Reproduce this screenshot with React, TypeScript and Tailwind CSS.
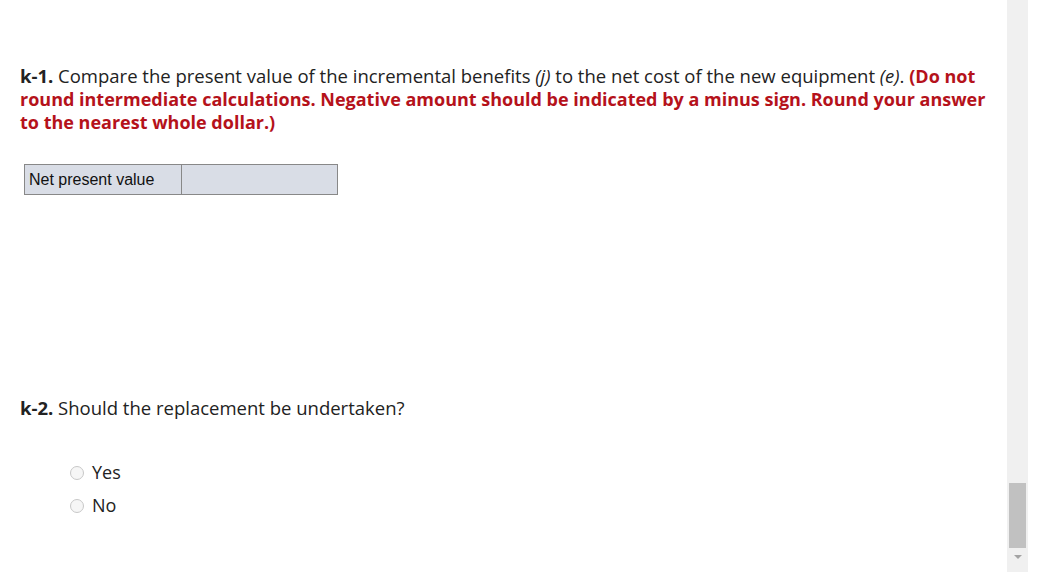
const Radio = ({ label }: { label: string }) => (
  <label className="flex items-center h-[33px] gap-[8px]">
    <span className="w-[14px] h-[14px] rounded-full border border-[#c8c8c8] bg-[#f6f6f6]" />
    <span className="text-[18px] text-[#222]">{label}</span>
  </label>
)

const App = () => {
  return (
    <div className="flex h-[572px] w-[1047px] bg-white overflow-hidden font-['Open_Sans',sans-serif]">
      <div className="flex-1 pl-[20px] pr-[10px] pt-[64px]">
        <p className="text-[18.5px] leading-[23px] text-[#222] whitespace-nowrap">
          <b>k-1.</b> Compare the present value of the incremental benefits <i>(j)</i> to the net cost of the new
          equipment <i>(e)</i>. <b className="text-[18px] leading-[18px] text-[#b5121b]">(Do not</b>
          <br />
          <b className="text-[18px] leading-[18px] text-[#b5121b]">
            round intermediate calculations. Negative amount should be indicated by a minus sign. Round your answer
          </b>
          <br />
          <b className="text-[18px] leading-[18px] text-[#b5121b]">to the nearest whole dollar.)</b>
        </p>

        <table className="mt-[31px] ml-[4px] border-collapse font-['Liberation_Sans',Arial,sans-serif] text-[16px] text-[#111]">
          <tbody>
            <tr className="h-[30px] bg-[#d9dde6]">
              <td className="w-[157px] border border-[#888] pl-[4px]">Net present value</td>
              <td className="w-[156px] border border-[#888]"></td>
            </tr>
          </tbody>
        </table>

        <p className="mt-[201px] text-[18.5px] leading-[23px] text-[#222]">
          <b>k-2.</b> Should the replacement be undertaken?
        </p>

        <div className="mt-[37px] ml-[50px] flex flex-col">
          <Radio label="Yes" />
          <Radio label="No" />
        </div>
      </div>

      <div className="w-[21px] mr-[19px] bg-[#f0f0f0] flex flex-col items-center justify-end">
        <div className="w-[17px] h-[65px] bg-[#c1c1c1]" />
        <div className="h-[24px] pt-[7px]">
          <div className="w-0 h-0 border-l-[4px] border-r-[4px] border-t-[4px] border-l-transparent border-r-transparent border-t-[#a3a3a3]" />
        </div>
      </div>
    </div>
  )
}

export default App
